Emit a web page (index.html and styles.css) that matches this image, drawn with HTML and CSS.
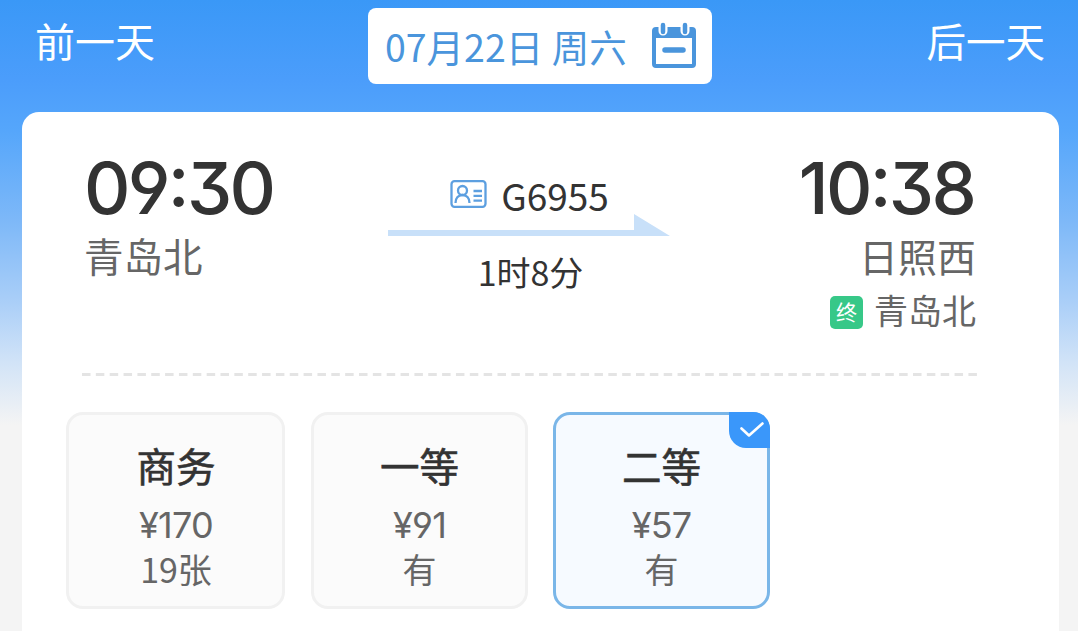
FILE: index.html
```html
<!DOCTYPE html>
<html lang="zh-CN">
<head>
    <meta charset="UTF-8">
    <meta name="viewport" content="width=device-width, initial-scale=1.0">
    <title>车次详情</title>
    <link rel="stylesheet" href="styles.css">
</head>
<body>
    <!-- Date switcher -->
    <div class="date-bar">
        <a class="day-link">前一天</a>
        <div class="date-picker">
            <span class="date-text">07月22日 周六</span>
            <svg class="calendar-icon" width="46" height="48" viewBox="0 0 46 48">
                <rect x="3" y="7" width="40" height="37" rx="2" fill="#fff" stroke="#4a95dc" stroke-width="4"/>
                <path d="M3 7h40v9H3z" fill="#4a95dc"/>
                <path d="M12 0v9M34 0v9" stroke="#fff" stroke-width="9" stroke-linecap="round"/>
                <path d="M12 3v7M34 3v7" stroke="#4a95dc" stroke-width="4.500" stroke-linecap="round"/>
                <path d="M14 28h18" stroke="#4a95dc" stroke-width="5.500" stroke-linecap="round"/>
            </svg>
        </div>
        <a class="day-link next">后一天</a>
    </div>

    <div class="card">
        <!-- Departure / train / arrival -->
        <div class="trip">
            <div class="stop">
                <div class="time">09:30</div>
                <div class="station">青岛北</div>
            </div>
            <div class="train">
                <div class="train-no">
                    <svg width="37" height="28" viewBox="0 0 37 28" fill="none" stroke="#5c9fe0" stroke-width="2.300">
                        <rect x="1.5" y="1.2" width="34" height="25.6" rx="3"/>
                        <circle cx="12.5" cy="10.5" r="4.5"/>
                        <path d="M5.500 23c0-5 3-8 7-8s7 3 7 8M23.500 11h8.500M23.500 15.800h8.500M23.500 20.600h8.500"/>
                    </svg>
                    <span>G6955</span>
                </div>
                <svg class="arrow" width="282" height="22" viewBox="0 0 282 22">
                    <path d="M0 16h246V0l36 22H0z" fill="#c8e0f9"/>
                </svg>
                <div class="duration">1时8分</div>
            </div>
            <div class="stop arrive">
                <div class="time">10:38</div>
                <div class="station">日照西</div>
                <div class="terminal"><span class="tag">终</span>青岛北</div>
            </div>
        </div>

        <svg class="divider" width="896" height="3" viewBox="0 0 896 3">
            <path d="M0 1.500h896" stroke="#e4e4e4" stroke-width="3" stroke-dasharray="8.500 5.350"/>
        </svg>

        <!-- Seat classes -->
        <div class="seats">
            <div class="seat business">
                <div class="seat-name">商务</div>
                <div class="price">¥170</div>
                <div class="count">19张</div>
            </div>
            <div class="seat">
                <div class="seat-name">一等</div>
                <div class="price">¥91</div>
                <div class="count">有</div>
            </div>
            <div class="seat selected">
                <div class="seat-name">二等</div>
                <div class="price">¥57</div>
                <div class="count">有</div>
                <div class="check">
                    <svg width="24" height="16" viewBox="0 0 24 16">
                        <path d="M1.500 6.500l7.500 7L22.500 1.500" fill="none" stroke="#fff" stroke-width="2.600" stroke-linecap="round" stroke-linejoin="round"/>
                    </svg>
                </div>
            </div>
        </div>
    </div>
</body>
</html>
```
FILE: styles.css
```css
* {
    box-sizing: border-box;
}

body {
    margin: 0;
    height: 631px;
    overflow: hidden;
    font-family: "Noto Sans CJK SC", sans-serif;
    color: #333;
    background: linear-gradient(#3a98f7 0, #4b9dfb 80px, #55a6fb 130px, #7db8f8 220px, #a9cef8 300px, #d3e4f7 365px, #f4f4f4 425px, #f4f4f4 631px);
}

svg {
    display: block;
    flex: none;
}

/* Date switcher */
.date-bar {
    height: 112px;
    padding: 8px 33px 0 35px;
    display: flex;
    justify-content: space-between;
    align-items: flex-start;
}

.day-link {
    width: 120px;
    font-size: 40px;
    line-height: 64px;
    color: #fff;
    white-space: nowrap;
}

.next {
    font-size: 39.5px;
    text-align: right;
}

.date-picker {
    width: 344px;
    height: 76px;
    padding: 0 15px 0 17px;
    display: flex;
    justify-content: space-between;
    align-items: center;
    background: #fff;
    border-radius: 8px;
}

.date-text {
    font-size: 37.5px;
    line-height: 76px;
    color: #4a95dc;
    white-space: nowrap;
}

/* White card */
.card {
    width: 1037px;
    height: 540px;
    margin-left: 22px;
    padding-top: 40px;
    background: #fff;
    border-radius: 17px 17px 0 0;
}

.trip {
    height: 221px;
    padding: 0 83px 0 63px;
    display: grid;
    grid-template-columns: 303px 282px 1fr;
}

.time,
.price {
    font-family: Inter, sans-serif;
    font-feature-settings: "cv03", "cv04", "cv09", "case";
}

.time {
    font-size: 72px;
    font-weight: 500;
    line-height: 72px;
    letter-spacing: -2.7px;
}

.station {
    font-size: 39.5px;
    line-height: 62px;
    color: #666;
}

.stop:not(.arrive) {
    margin-left: -1px;
}

.arrive {
    text-align: right;
}

.arrive .time {
    margin-right: 2px;
}

.arrive .station {
    font-size: 39px;
}

.terminal {
    display: flex;
    justify-content: flex-end;
    align-items: center;
    font-size: 34px;
    line-height: 48px;
    color: #666;
}

.tag {
    width: 33px;
    height: 33px;
    margin: 4px 11px 0 0;
    border-radius: 5px;
    background: #37c888;
    color: #fff;
    font-size: 21px;
    line-height: 31px;
    text-align: center;
}

.train {
    padding-top: 20px;
    display: flex;
    flex-direction: column;
    align-items: center;
}

.train-no {
    height: 42px;
    padding: 1px 0 0 1px;
    display: flex;
    align-items: center;
    gap: 14px;
    font-size: 37px;
    line-height: 44px;
}

.train-no span {
    padding-top: 3px;
}

.duration {
    margin-top: 12px;
    padding-left: 3px;
    font-size: 34px;
    line-height: 48px;
}

.divider {
    margin-left: 60px;
}

/* Seat classes */
.seats {
    margin: 36px 0 0 44px;
    display: flex;
    gap: 26px;
}

.seat {
    position: relative;
    width: 217px;
    height: 197px;
    padding-top: 10px;
    border: 3px solid #f1f1f1;
    border-radius: 17px;
    background: #fbfbfb;
    text-align: center;
}

.business {
    width: 219px;
    padding-left: 1px;
}

.seat-name {
    font-size: 39.5px;
    line-height: 80px;
    -webkit-text-stroke: 0.6px #333;
}

.price {
    font-size: 36px;
    line-height: 40px;
    letter-spacing: -0.8px;
    color: #666;
}

.count {
    font-size: 34px;
    line-height: 48px;
    color: #666;
}

.selected {
    margin-left: -1px;
    border-color: #7ab6e8;
    background: #f6faff;
}

.check {
    position: absolute;
    top: -3px;
    right: -3px;
    width: 41px;
    height: 36px;
    padding: 10px 0 0 11px;
    border-radius: 0 17px 0 17px;
    background: #3a97fa;
}
```
